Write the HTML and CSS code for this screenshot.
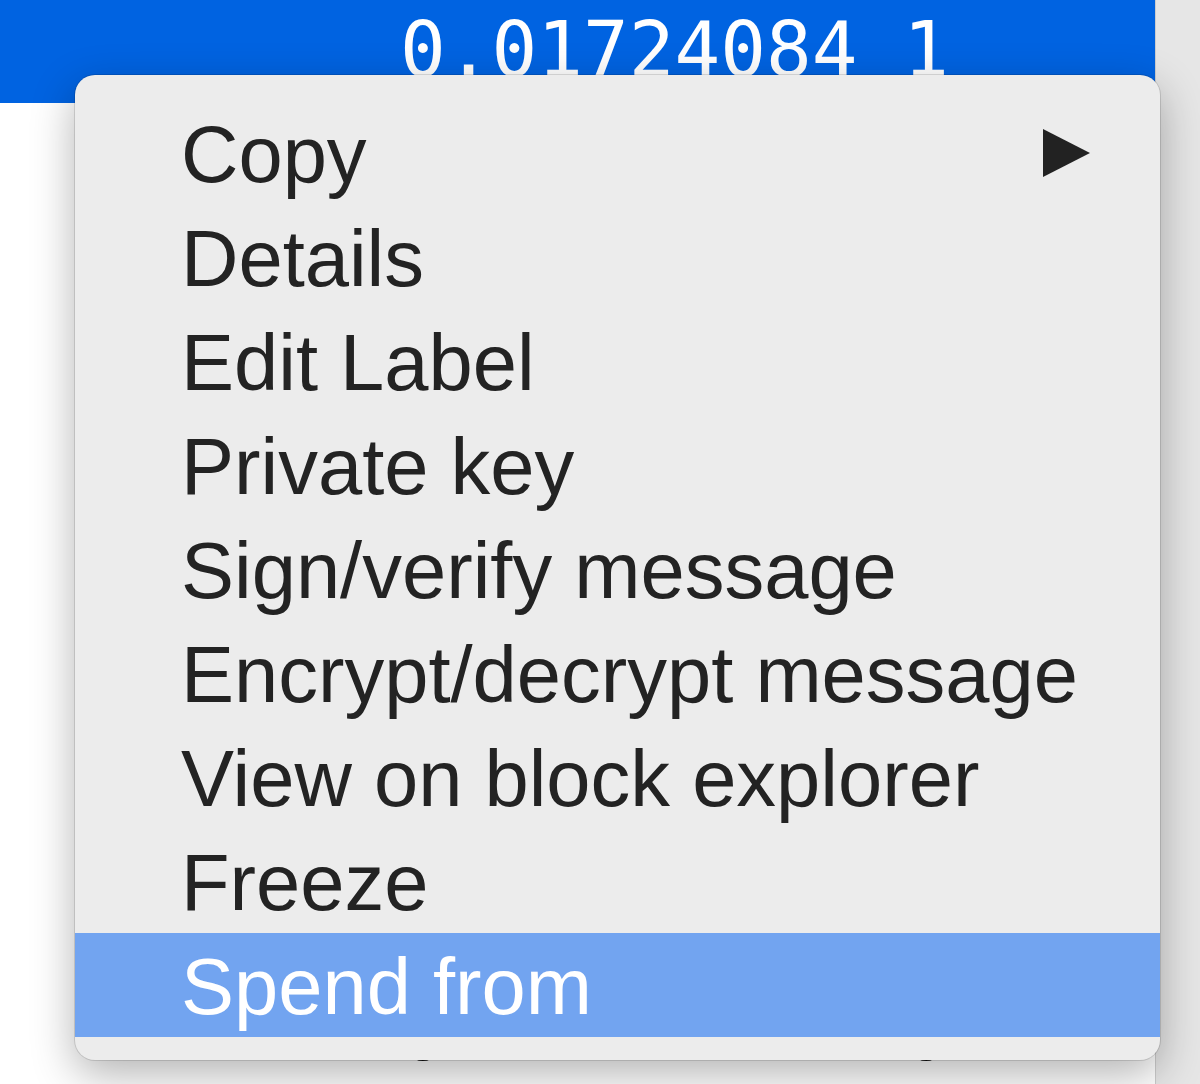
FILE: index.html
```html
<!DOCTYPE html>
<html>
<head>
<meta charset="utf-8">
<link rel="stylesheet" href="styles.css">
</head>
<body>
<div class="window">
  <div class="table">
    <div class="rows">
      <div class="row selected"><span class="cell">0.01724084 1</span></div>
      <div class="row"><span class="cell">0.01212471 1</span></div>
      <div class="row"><span class="cell">0.04217421 1</span></div>
      <div class="row"><span class="cell">0.01274124 1</span></div>
      <div class="row"><span class="cell">0.02147712 1</span></div>
      <div class="row"><span class="cell">0.01472214 1</span></div>
      <div class="row"><span class="cell">0.07214241 1</span></div>
      <div class="row"><span class="cell">0.01124772 1</span></div>
      <div class="row"><span class="cell">0.04121271 1</span></div>
      <div class="row"><span class="cell">0.         0</span></div>
    </div>
  </div>
  <div class="scrollbar"></div>
</div>

<div class="menu">
  <div class="item has-sub"><span class="label">Copy</span><span class="arrow"></span></div>
  <div class="item"><span class="label">Details</span></div>
  <div class="item"><span class="label">Edit Label</span></div>
  <div class="item"><span class="label">Private key</span></div>
  <div class="item"><span class="label">Sign/verify message</span></div>
  <div class="item"><span class="label">Encrypt/decrypt message</span></div>
  <div class="item"><span class="label">View on block explorer</span></div>
  <div class="item"><span class="label">Freeze</span></div>
  <div class="item active"><span class="label">Spend from</span></div>
</div>
</body>
</html>
```

FILE: styles.css
```css
html, body {
  margin: 0;
  padding: 0;
  background: #ffffff;
  overflow: hidden;
}

.window {
  display: flex;
  width: 1200px;
  height: 1084px;
  overflow: hidden;
}

.table {
  flex: 1;
  overflow: hidden;
  background: #ffffff;
}

.rows {
  margin-top: -5px;
}

.row {
  height: 109.5px;
  line-height: 110px;
  padding-left: 400px;
  font-family: "DejaVu Sans Mono", "Liberation Mono", monospace;
  font-size: 76px;
  color: #111111;
  white-space: pre;
  overflow: hidden;
}

.row.selected {
  height: 108px;
  background: #0063e1;
  color: #ffffff;
}

.scrollbar {
  width: 44px;
  flex: none;
  background: #e6e6e6;
  border-left: 1px solid #cccccc;
}

.menu {
  position: absolute;
  left: 75px;
  top: 75px;
  width: 1085px;
  height: 985px;
  box-sizing: border-box;
  padding-top: 26px;
  background: #ececec;
  border-radius: 20px;
  box-shadow: 0 0 0 1px rgba(0, 0, 0, 0.12), 0 14px 44px rgba(0, 0, 0, 0.30);
  font-family: "Liberation Sans", "Helvetica Neue", Arial, sans-serif;
  font-size: 79.5px;
  color: #232323;
  overflow: hidden;
}

.item {
  height: 104px;
  display: flex;
  align-items: center;
  justify-content: space-between;
  padding-left: 106px;
  padding-right: 70px;
}

.item .label {
  padding-top: 4px;
  line-height: 100px;
  white-space: nowrap;
}

.item.active {
  background: #72a4f0;
  color: #ffffff;
}

.arrow {
  width: 0;
  height: 0;
  border-top: 24px solid transparent;
  border-bottom: 24px solid transparent;
  border-left: 47px solid #222222;
}
```
